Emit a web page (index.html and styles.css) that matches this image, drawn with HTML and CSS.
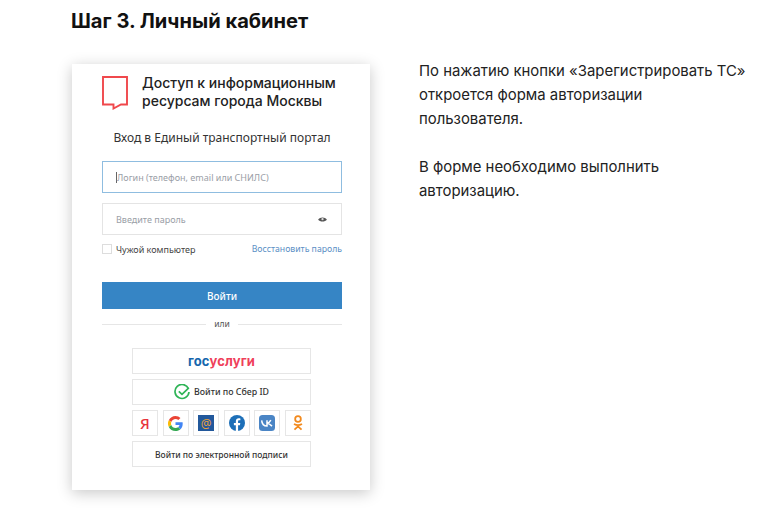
FILE: index.html
```html
<!DOCTYPE html>
<html lang="ru">
<head>
<meta charset="utf-8">
<title>Шаг 3. Личный кабинет</title>
<link rel="stylesheet" href="styles.css">
</head>
<body>
<main class="page">
  <h1 class="title">Шаг 3. Личный кабинет</h1>
  <div class="columns">
    <section class="card">
      <header class="brand">
        <svg class="brand-logo" width="26" height="34" viewBox="0 0 26 34"><path d="M1 1H25V28.500H19L11.500 32.500V28.500H1Z" fill="none" stroke="#f0484c" stroke-width="1.900"/></svg>
        <div class="brand-name">Доступ к информационным<br>ресурсам города Москвы</div>
      </header>
      <div class="subtitle">Вход в Единый транспортный портал</div>
      <div class="field field-active"><span class="caret"></span><span>Логин (телефон, email или СНИЛС)</span></div>
      <div class="field field-password"><span>Введите пароль</span>
        <svg width="9" height="7" viewBox="0 0 10 8"><path d="M0 4C2 .8 8 .8 10 4 8 7.200 2 7.200 0 4Z" fill="#555"/><circle cx="5" cy="3.600" r="1.300" fill="#ddd"/></svg>
      </div>
      <div class="options">
        <label class="check"><span class="box"></span>Чужой компьютер</label>
        <a class="restore">Восстановить пароль</a>
      </div>
      <button class="submit">Войти</button>
      <div class="divider"><span>или</span></div>
      <div class="alt">
        <div class="alt-btn gos"><b class="blue">гос</b><b class="red">услуги</b></div>
        <div class="alt-btn sber">
          <svg width="16" height="16" viewBox="0 0 16 16"><path d="M14.500 4.800A7 7 0 1 0 15 8" fill="none" stroke="#2fb457" stroke-width="1.700"/><path d="M4.800 7.400L8 10.400 14.800 3.800" fill="none" stroke="#2fb457" stroke-width="1.700"/></svg>
          <span>Войти по Сбер ID</span>
        </div>
        <div class="socials">
          <div class="soc"><span class="ya">Я</span></div>
          <div class="soc">
            <svg width="15" height="15" viewBox="0 0 48 48"><path fill="#ea4335" d="M24 9.500c3.500 0 6.700 1.300 9.100 3.500l6.800-6.800C35.800 2.400 30.300 0 24 0 14.600 0 6.500 5.400 2.600 13.200l7.900 6.100C12.400 13.700 17.700 9.500 24 9.500z"/><path fill="#4285f4" d="M47 24.500c0-1.600-.1-3.100-.4-4.500H24v9h12.900c-.6 3-2.300 5.500-4.800 7.200l7.700 6c4.500-4.200 7.200-10.300 7.200-17.700z"/><path fill="#fbbc05" d="M10.500 28.700A14.500 14.500 0 0 1 10.500 19.300l-7.900-6.100a24 24 0 0 0 0 21.600z"/><path fill="#34a853" d="M24 48c6.500 0 11.900-2.100 15.800-5.800l-7.700-6c-2.100 1.400-4.900 2.300-8.100 2.300-6.300 0-11.600-4.200-13.500-9.800l-7.900 6.100C6.500 42.600 14.600 48 24 48z"/></svg>
          </div>
          <div class="soc"><span class="mail">@</span></div>
          <div class="soc">
            <svg width="16" height="16" viewBox="0 0 18 18"><circle cx="9" cy="9" r="9" fill="#1d6fb8"/><path fill="#fff" d="M10.200 18V11.400H12.300L12.700 8.900H10.200V7.300C10.200 6.500 10.500 6 11.500 6H12.800V3.800C12.400 3.700 11.700 3.600 10.900 3.600 9 3.600 7.700 4.800 7.700 6.900V8.900H5.500V11.400H7.700V18Z"/></svg>
          </div>
          <div class="soc">
            <svg width="16" height="16" viewBox="0 0 18 18"><rect width="18" height="18" rx="4" fill="#4a85c5"/><path fill="none" stroke="#fff" stroke-width="1.700" d="M3 6C3.300 10 5.400 12.300 9 12.400V6M9 9.200C11.200 9 12.300 7.700 13.300 5.800M9.300 9.200C11.500 9.400 13 10.800 14.600 12.500"/></svg>
          </div>
          <div class="soc">
            <svg width="12" height="16" viewBox="0 0 13 18"><circle cx="6.500" cy="4.500" r="3.200" fill="none" stroke="#f28a1e" stroke-width="2"/><path d="M2 10C5 11.800 8 11.800 11 10M6.500 11.500V12.500M2.500 16.500L6.500 12.800 10.500 16.500" fill="none" stroke="#f28a1e" stroke-width="2"/></svg>
          </div>
        </div>
        <div class="alt-btn sign">Войти по электронной подписи</div>
      </div>
    </section>
    <section class="info">
      <p>По нажатию кнопки «Зарегистрировать ТС»<br>откроется форма авторизации<br>пользователя.</p>
      <p>В форме необходимо выполнить<br>авторизацию.</p>
    </section>
  </div>
</main>
</body>
</html>
```

FILE: styles.css
```css
* { box-sizing: border-box; }
html, body { margin: 0; height: 100%; background: #fff; overflow: hidden; }
body { font-family: "Noto Sans", sans-serif; color: #1d1d22; }
.page { padding: 8px 0 0 71px; }
.title { margin: 0; font-family: Inter, sans-serif; font-size: 20.100px; line-height: 27px; font-weight: 700; color: #111; }
.columns { display: flex; align-items: flex-start; margin-top: 29px; }

.card { width: 298px; height: 426px; margin-left: 1px; padding: 12px 28px 0 30px; background: #fff; box-shadow: 0 3px 14px rgba(0,0,0,.22); font-size: 9px; }
.brand { display: flex; gap: 14px; height: 36px; }
.brand-logo { flex: none; }
.brand-name { margin-top: -2px; font-family: Inter, sans-serif; font-size: 14px; line-height: 18px; font-weight: 500; color: #222; white-space: nowrap; }
.subtitle { margin-top: 17px; text-align: center; font-size: 12px; line-height: 17px; color: #333; }

.field { display: flex; align-items: center; height: 32px; padding: 0 14px 0 13px; border: 1px solid #e4e4e4; color: #9a9ea6; }
.field-active { border-color: #8fbde0; margin-top: 15px; }
.field-password { margin-top: 10px; justify-content: space-between; }
.caret { width: 1px; height: 11px; background: #666; }

.options { display: flex; justify-content: space-between; align-items: center; margin-top: 7px; height: 14px; }
.check { display: flex; align-items: center; gap: 4px; color: #444; }
.box { width: 10px; height: 10px; border: 1px solid #ddd; }
.restore { color: #5b8fc5; font-size: 8.700px; }

.submit { display: block; width: 100%; height: 27px; margin-top: 26px; border: 0; background: #3685c5; color: #fff; font: 500 10px "Noto Sans", sans-serif; }
.divider { display: flex; align-items: center; gap: 8px; margin-top: 7px; font-size: 8.500px; line-height: 16px; color: #555; }
.divider::before, .divider::after { content: ""; flex: 1; border-top: 1px solid #e6e6e6; }

.alt { width: 179px; margin: 16px 0 0 30px; display: flex; flex-direction: column; gap: 5px; }
.alt-btn { display: flex; align-items: center; justify-content: center; height: 26px; border: 1px solid #e6e6e6; color: #333; font-weight: 500; font-size: 8.800px; }
.gos { font-family: Inter, sans-serif; font-size: 13px; letter-spacing: .1px; }
.blue { color: #1566ad; }
.red { color: #ef3f5b; }
.sber { gap: 4px; }
.sign { font-size: 8.500px; }
.socials { display: flex; justify-content: space-between; }
.soc { display: flex; align-items: center; justify-content: center; width: 26px; height: 26px; border: 1px solid #e6e6e6; }
.ya { color: #e8333a; font-size: 15px; font-weight: 500; }
.mail { display: flex; align-items: center; justify-content: center; width: 16px; height: 16px; background: #22589b; color: #e8a13c; font-size: 12px; }

.info { margin-left: 49px; margin-top: -5px; font-family: Inter, sans-serif; font-size: 14.900px; line-height: 24px; color: #222; white-space: nowrap; }
.info p { margin: 0 0 24px; }
```
